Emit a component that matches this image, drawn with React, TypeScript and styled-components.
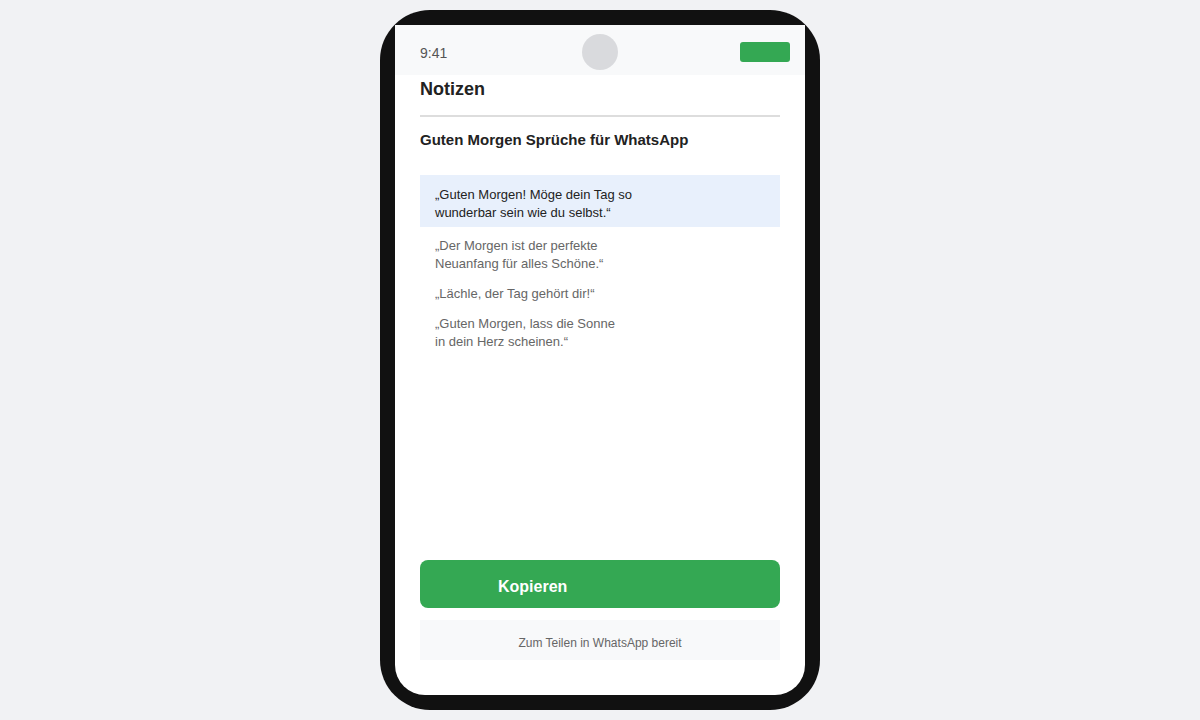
import React from "react";
import styled, { createGlobalStyle } from "styled-components";

const Global = createGlobalStyle`
  html, body { margin: 0; padding: 0; background: #f1f2f4; }
  body { font-family: "Liberation Sans", Arial, sans-serif; }
  * { box-sizing: border-box; }
`;

const Page = styled.div`
  width: 1200px;
  height: 720px;
  display: flex;
  justify-content: center;
  padding-top: 10px;
`;

const Phone = styled.div`
  width: 440px;
  height: 700px;
  background: #111111;
  border-radius: 50px;
  padding: 15px;
`;

const Screen = styled.div`
  width: 410px;
  height: 670px;
  background: #ffffff;
  border-radius: 0 0 30px 30px;
  display: flex;
  flex-direction: column;
  overflow: hidden;
`;

const StatusBar = styled.div`
  height: 50px;
  flex: none;
  background: #f8f9fa;
  display: flex;
  align-items: center;
  justify-content: space-between;
  padding: 4px 15px 0 25px;
`;

const Time = styled.span`
  font-size: 14px;
  color: #555555;
  width: 40px;
  padding-top: 2px;
`;

const Notch = styled.div`
  width: 36px;
  height: 36px;
  border-radius: 50%;
  background: #d9dadd;
`;

const Battery = styled.div`
  width: 50px;
  height: 20px;
  border-radius: 3px;
  background: #34a853;
`;

const Content = styled.div`
  flex: 1;
  display: flex;
  flex-direction: column;
  padding: 0 25px 35px;
`;

const Title = styled.h1`
  margin: 3px 0 0;
  font-size: 18px;
  line-height: 22px;
  font-weight: 700;
  color: #222222;
  padding-bottom: 15px;
  border-bottom: 2px solid #dddddd;
`;

const Heading = styled.h2`
  margin: 14px 0 0;
  font-size: 15px;
  line-height: 18px;
  font-weight: 700;
  color: #222222;
`;

const List = styled.div`
  margin-top: 26px;
  display: flex;
  flex-direction: column;
`;

const Item = styled.div<{ $active?: boolean }>`
  padding: ${(p) => (p.$active ? "11px 15px 5px" : "8px 15px 2px")};
  margin-top: ${(p) => (p.$active ? "0" : "2px")};
  font-size: 13px;
  line-height: 18px;
  color: ${(p) => (p.$active ? "#222222" : "#666666")};
  background: ${(p) => (p.$active ? "#e8f0fc" : "transparent")};
`;

const Spacer = styled.div`
  flex: 1;
`;

const CopyButton = styled.button`
  height: 48px;
  width: 100%;
  border: none;
  border-radius: 8px;
  background: #34a853;
  color: #ffffff;
  font-family: "Liberation Sans", Arial, sans-serif;
  font-size: 16px;
  font-weight: 700;
  text-align: left;
  padding: 6px 0 0 78px;
  cursor: pointer;
`;

const Footer = styled.div`
  margin-top: 12px;
  height: 40px;
  background: #f8f9fa;
  display: flex;
  align-items: center;
  justify-content: center;
  font-size: 12px;
  color: #666666;
  padding-top: 5px;
`;

const quotes = [
  ["„Guten Morgen! Möge dein Tag so", "wunderbar sein wie du selbst.“"],
  ["„Der Morgen ist der perfekte", "Neuanfang für alles Schöne.“"],
  ["„Lächle, der Tag gehört dir!“"],
  ["„Guten Morgen, lass die Sonne", "in dein Herz scheinen.“"],
];

export default function App() {
  return (
    <>
      <Global />
      <Page>
        <Phone>
          <Screen>
            <StatusBar>
              <Time>9:41</Time>
              <Notch />
              <Battery />
            </StatusBar>
            <Content>
              <Title>Notizen</Title>
              <Heading>Guten Morgen Sprüche für WhatsApp</Heading>
              <List>
                {quotes.map((lines, i) => (
                  <Item key={i} $active={i === 0}>
                    {lines.map((l, j) => (
                      <React.Fragment key={j}>
                        {j > 0 && <br />}
                        {l}
                      </React.Fragment>
                    ))}
                  </Item>
                ))}
              </List>
              <Spacer />
              <CopyButton>Kopieren</CopyButton>
              <Footer>Zum Teilen in WhatsApp bereit</Footer>
            </Content>
          </Screen>
        </Phone>
      </Page>
    </>
  );
}
